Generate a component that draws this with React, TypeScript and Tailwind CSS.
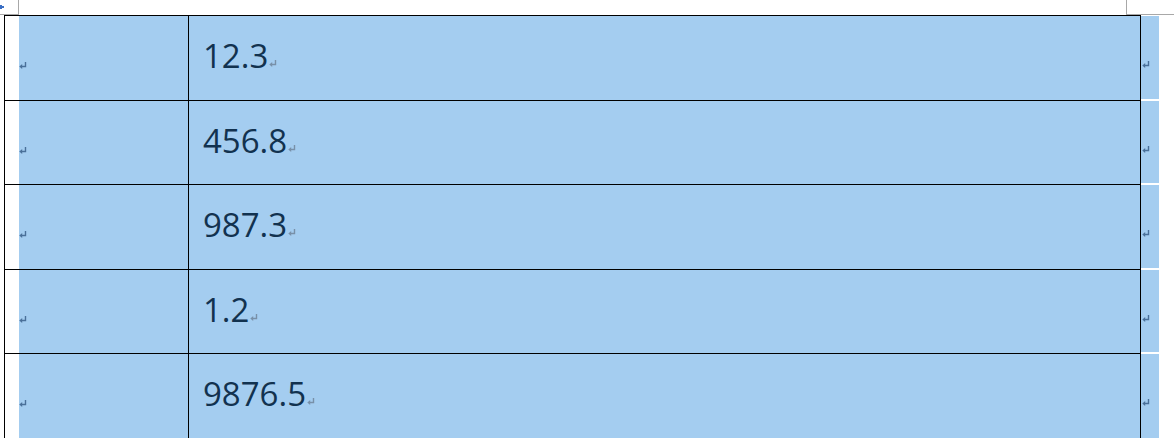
import React from "react";

const rows = [
  { value: "12.3", h: "h-[85px]" },
  { value: "456.8", h: "h-[84px]" },
  { value: "987.3", h: "h-[85px]" },
  { value: "1.2", h: "h-[84px]" },
  { value: "9876.5", h: "h-[86px]" },
];

// Word paragraph mark
function Mark({ className = "" }: { className?: string }) {
  return (
    <svg width="8" height="7" viewBox="0 0 8 7" className={className}>
      <path d="M6.5 0V4.5H2.5" stroke="currentColor" strokeWidth="1.4" fill="none" />
      <path d="M0.3 4.5L3.2 2V7Z" fill="currentColor" />
    </svg>
  );
}

export default function App() {
  return (
    <div className="w-[1174px] h-[438px] bg-white overflow-hidden font-['Open_Sans',sans-serif]">
      {/* top strip with table handle */}
      <div className="flex h-[15px]">
        <div className="w-[19px] h-[15px] border-r border-b border-[#a8a8a8] flex items-center">
          <svg width="4" height="6" viewBox="0 0 4 6">
            <path d="M0 1h2v1h2v2h-2v1h-2z" fill="#3b6fc4" />
          </svg>
        </div>
        <div className="flex-1" />
        <div className="w-[48px] h-[15px] border-l border-b border-[#a8a8a8]" />
      </div>

      <div className="flex">
        <div className="ml-[4px] w-[1137px] border-t border-black">
          {rows.map((r) => (
            <div key={r.value} className={`flex border-b border-black ${r.h}`}>
              <div className="w-[185px] border-l border-r border-black flex">
                <div className="w-[14px]" />
                <div className="flex-1 bg-[#a4cdf0] pt-[46px]">
                  <Mark className="text-[#4a7099]" />
                </div>
              </div>
              <div className="w-[952px] border-r border-black bg-[#a4cdf0] pl-[14px] pt-[23px]">
                <span className="text-[33px] font-normal leading-none text-[#12324f]">{r.value}</span>
                <Mark className="inline-block ml-px text-[#7890a8]" />
              </div>
            </div>
          ))}
        </div>
        <div className="w-[18px] pt-px">
          {rows.map((r) => (
            <div key={r.value} className={`${r.h} pb-[2px]`}>
              <div className="h-full bg-[#a4cdf0] pt-[45px] pl-[1px]">
                <Mark className="text-[#4a7099]" />
              </div>
            </div>
          ))}
        </div>
      </div>
    </div>
  );
}
